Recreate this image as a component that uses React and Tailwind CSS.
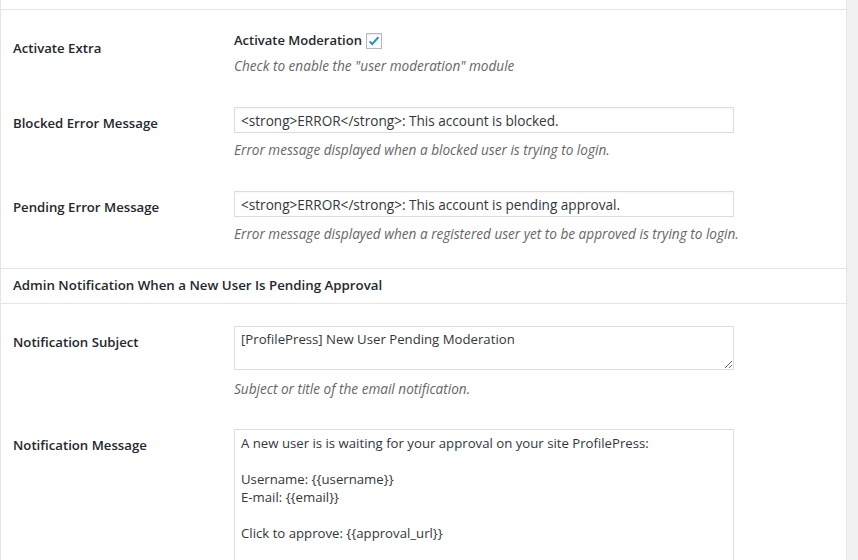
const font = { fontFamily: '"Open Sans", "Noto Sans", sans-serif' };

function Row({ label, labelPad = 'pt-[7px]', children, className = '' }) {
  return (
    <div className={`flex pt-4 pb-4 ${className}`}>
      <div className={`w-[221px] shrink-0 text-[13.2px] leading-[18px] font-semibold text-[#23282d] ${labelPad}`}>
        {label}
      </div>
      <div className="flex-1">{children}</div>
    </div>
  );
}

function Desc({ children, className = 'mt-2' }) {
  return (
    <p className={`text-[13.6px] leading-[18px] italic text-[#666] ${className}`}>{children}</p>
  );
}

function TextInput({ value }) {
  return (
    <input
      readOnly
      value={value}
      className="block w-[500px] h-[26px] border border-[#ddd] px-[6px] text-[13.6px] text-[#32373c] bg-white shadow-[inset_0_1px_2px_rgba(0,0,0,0.04)] outline-none"
    />
  );
}

export default function App() {
  return (
    <div className="h-[560px] overflow-hidden bg-[#f1f1f1] flex" style={font}>
      <div className="w-[847px] bg-white border-l border-r border-[#e5e5e5] pl-[12px]">
        <div className="h-[10px] border-b border-[#e5e5e5] -ml-[12px]" />

        <Row label="Activate Extra" labelPad="pt-[13px]">
          <div className="pt-[6px] flex items-center h-[24px] gap-1 text-[13px] font-semibold text-[#23282d]">
            <span>Activate Moderation</span>
            <span className="w-4 h-4 border border-[#b4b9be] bg-white flex items-center justify-center shadow-[inset_0_1px_2px_rgba(0,0,0,0.1)]">
              <svg viewBox="0 0 16 16" className="w-[14px] h-[14px]">
                <path d="M3 8.5l3 3 7-8" fill="none" stroke="#1e8cbe" strokeWidth="2.2" />
              </svg>
            </span>
          </div>
          <Desc className="mt-[7px]">Check to enable the "user moderation" module</Desc>
        </Row>

        <Row label="Blocked Error Message">
          <TextInput value="<strong>ERROR</strong>: This account is blocked." />
          <Desc>Error message displayed when a blocked user is trying to login.</Desc>
        </Row>

        <Row label="Pending Error Message" className="pb-[25px]">
          <TextInput value="<strong>ERROR</strong>: This account is pending approval." />
          <Desc>Error message displayed when a registered user yet to be approved is trying to login.</Desc>
        </Row>

        <div className="-ml-[12px] pl-[12px] border-t border-b border-[#e5e5e5] h-[36px] flex items-center text-[13.3px] font-semibold text-[#23282d]">
          Admin Notification When a New User Is Pending Approval
        </div>

        <Row label="Notification Subject" className="pt-[22px]">
          <textarea
            readOnly
            rows={2}
            defaultValue="[ProfilePress] New User Pending Moderation"
            className="block w-[500px] h-[44px] border border-[#ddd] px-[6px] pt-[3px] text-[13.2px] leading-[18px] text-[#32373c] bg-white outline-none resize-y"
          />
          <Desc className="mt-[10px]">Subject or title of the email notification.</Desc>
        </Row>

        <Row label="Notification Message" className="pt-[15px]">
          <textarea
            readOnly
            defaultValue={'A new user is is waiting for your approval on your site ProfilePress:\n\nUsername: {{username}}\nE-mail: {{email}}\n\nClick to approve: {{approval_url}}'}
            className="block w-[500px] h-[200px] border border-[#ddd] px-[6px] pt-[4px] text-[13.2px] leading-[18px] text-[#32373c] bg-white outline-none resize-y"
          />
        </Row>
      </div>
    </div>
  );
}
